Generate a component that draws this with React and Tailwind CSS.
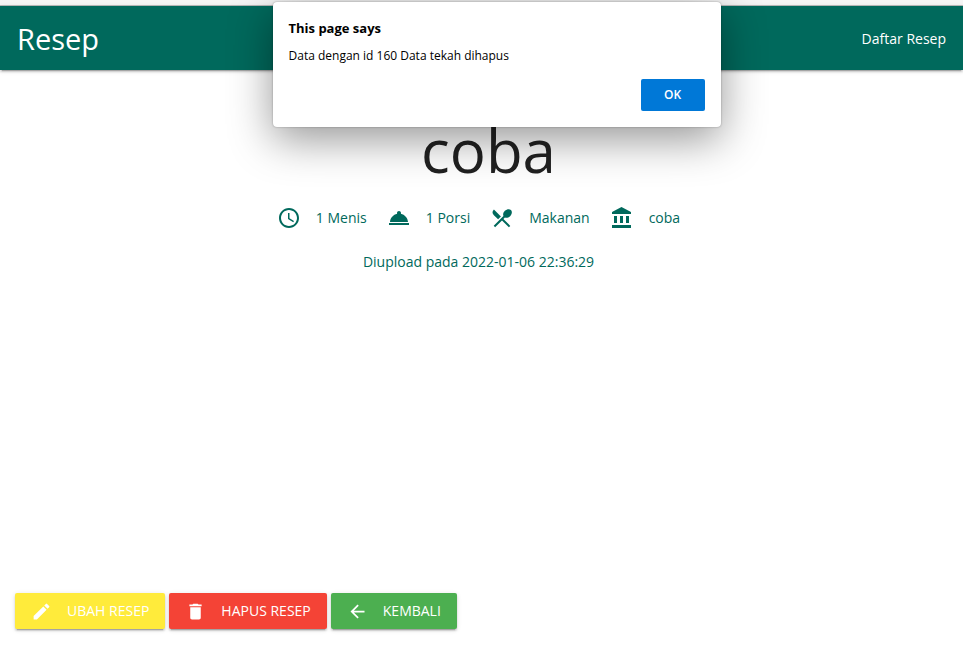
import {
  MdAccessTime,
  MdArrowBack,
  MdDelete,
  MdEdit,
  MdRestaurantMenu,
} from "react-icons/md";

function BankIcon({ className }) {
  return (
    <svg viewBox="0 0 24 24" fill="currentColor" aria-hidden="true" className={className}>
      <path d="M4 10v7h3v-7H4zm6 0v7h3v-7h-3zM2 22h19v-3H2v3zm14-12v7h3v-7h-3zm-4.5-9L2 6v2h19V6l-9.5-5z" />
    </svg>
  );
}

function ServingIcon({ className }) {
  return (
    <svg viewBox="0 0 24 24" fill="currentColor" aria-hidden="true" className={className}>
      <path d="M2 17h20v2H2zm11.84-9.21c.1-.24.16-.51.16-.79 0-1.1-.9-2-2-2s-2 .9-2 2c0 .28.06.55.16.79C6.25 8.6 3.27 11.93 3 16h18c-.27-4.07-3.25-7.4-7.16-8.21z" />
    </svg>
  );
}

const details = [
  { Icon: MdAccessTime, text: "1 Menis" },
  { Icon: ServingIcon, text: "1 Porsi" },
  { Icon: MdRestaurantMenu, text: "Makanan" },
  { Icon: BankIcon, text: "coba" },
];

const actions = [
  { Icon: MdEdit, text: "UBAH RESEP", color: "bg-[#ffeb3b]" },
  { Icon: MdDelete, text: "HAPUS RESEP", color: "bg-[#f44336]" },
  { Icon: MdArrowBack, text: "KEMBALI", color: "bg-[#4caf50]" },
];

function AlertDialog() {
  return (
    <div
      role="alertdialog"
      aria-labelledby="alert-title"
      aria-describedby="alert-text"
      className="absolute top-0.5 left-1/2 ml-[15px] flex w-[448px] -translate-x-1/2 flex-col rounded bg-white p-4 text-black shadow-[0_0_2px_rgba(0,0,0,0.35),0_12px_44px_rgba(0,0,0,0.42)]"
    >
      <h2 id="alert-title" className="text-[13px] leading-5 font-bold">
        This page says
      </h2>
      <p id="alert-text" className="mt-2 text-xs leading-5">
        Data dengan id 160 Data tekah dihapus
      </p>
      <button
        type="button"
        className="mt-[13px] h-8 w-16 self-end rounded-xs bg-[#0078d7] text-xs font-semibold text-white"
      >
        OK
      </button>
    </div>
  );
}

export default function App() {
  return (
    <div className="relative flex min-h-screen flex-col bg-white font-['Open_Sans','Noto_Sans',sans-serif] text-sm text-[#00695c]">
      <div className="h-1.5 border-b border-[#bbbbbb] bg-[#f5f5f5]" />
      <nav className="flex h-16 items-center justify-between bg-[#00695c] px-[17px] pt-0.5 text-white shadow-[0_2px_2px_rgba(0,0,0,0.14),0_1px_5px_rgba(0,0,0,0.12),0_3px_1px_-2px_rgba(0,0,0,0.2)]">
        <a href="#beranda" className="text-[29px]">
          Resep
        </a>
        <a href="#daftar">Daftar Resep</a>
      </nav>

      <main className="flex grow flex-col">
        <section className="flex flex-col items-center pt-11 pr-1.5">
          <h1 className="pl-5 text-6xl leading-[72px] text-[#212121]">coba</h1>
          <ul className="mt-5 flex gap-5">
            {details.map(({ Icon, text }) => (
              <li key={text} className="flex items-center gap-[15px]">
                <Icon className="size-6" />
                {text}
              </li>
            ))}
          </ul>
          <p className="mt-5 leading-6">Diupload pada 2022-01-06 22:36:29</p>
        </section>

        <div className="mt-auto flex gap-1 px-[15px] pb-[18px]">
          {actions.map(({ Icon, text, color }) => (
            <button
              key={text}
              type="button"
              className={`flex h-9 items-center gap-[15px] rounded-xs px-4 text-sm text-white shadow-[0_2px_2px_rgba(0,0,0,0.14),0_1px_5px_rgba(0,0,0,0.12),0_3px_1px_-2px_rgba(0,0,0,0.2)] ${color}`}
            >
              <Icon className="size-[21px]" />
              {text}
            </button>
          ))}
        </div>
      </main>

      <AlertDialog />
    </div>
  );
}
